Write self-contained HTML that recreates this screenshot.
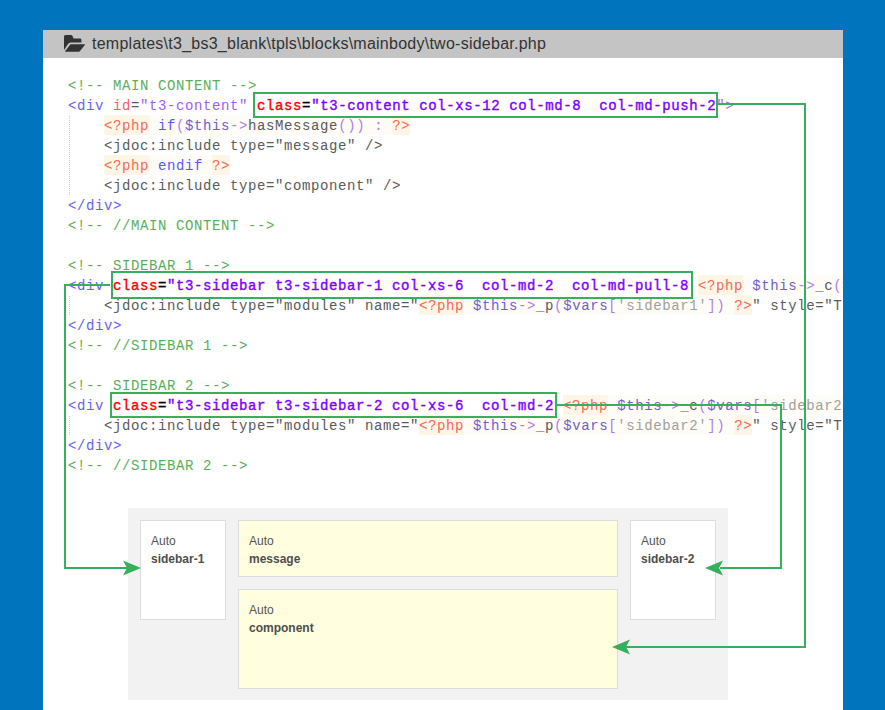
<!DOCTYPE html>
<html><head><meta charset="utf-8">
<style>
html,body{margin:0;padding:0;}
body{width:885px;height:710px;background:#0075bd;position:relative;overflow:hidden;}
#panel{position:absolute;left:43px;top:30px;width:800px;height:680px;background:#fff;overflow:hidden;}
#hdr{position:absolute;left:0;top:0;width:800px;height:28px;background:#c4c4c4;}
#hdr .t{position:absolute;left:49px;top:4px;font-family:"Liberation Sans",sans-serif;font-size:16px;letter-spacing:0.25px;line-height:20px;color:#333;white-space:nowrap;}
#fold{position:absolute;left:17px;top:2px;}
#code{position:absolute;left:25px;top:45.0px;font-family:"Liberation Mono",monospace;font-size:14.0px;letter-spacing:0.599px;line-height:20px;color:#5a5a5a;}
.ln{height:20px;line-height:22px;white-space:pre;}
.c{color:#5aae5a}
.t{color:#6464f2}
.t2{color:#a070f0}
.a{color:#ff5a6a}
.v{color:#a25cf5}
.g{color:#5a5a5a}
.pb{background:#fefcf6;display:inline-block;height:20px;vertical-align:top}
.pd{color:#f4685a;background:#fdf6e7;display:inline-block;height:20px;vertical-align:top}
.pk{color:#5858f0}
.po{color:#b27cf2}
.pv{color:#6f60c8}
.ps{color:#a0a0a0}
.ba{color:#ff0000;-webkit-text-stroke:0.4px #ff0000}
.bq{color:#000;-webkit-text-stroke:0.4px #000}
.bv{color:#8000ff;-webkit-text-stroke:0.4px #8000ff}
.guide{position:absolute;width:0;border-left:1px dotted #c8c8c8;}
.box{position:absolute;border:2px solid #36b05c;box-sizing:border-box;}
#lines{position:absolute;left:0;top:0;}
#diag{position:absolute;left:128px;top:508px;width:600px;height:192px;background:#f2f2f2;}
.mb{position:absolute;box-sizing:border-box;border:1px solid #dcdcdc;background:#fff;font-family:"Liberation Sans",sans-serif;color:#555;}
.mb.y{background:#ffffdf;}
.mb .l1{position:absolute;left:10px;top:13px;font-size:12px;line-height:14px;}
.mb .l2{position:absolute;left:10px;top:31px;font-size:12px;line-height:14px;font-weight:bold;color:#4e4e4e;}
</style></head><body>
<div id="panel">
  <div id="hdr">
    <svg id="fold" width="30" height="24" viewBox="0 0 30 24"><path d="M4 4.5 Q4 3 5.5 3 H11 Q12 3 12.5 4 L13.5 6.4 H20 Q21.4 6.4 21.4 7.8 V10.5 H10.5 Q9 10.5 8 12 L4 18 Z" fill="#333"/><path d="M10.5 12.2 H24.5 Q25.3 12.2 24.8 12.9 L19.8 19.3 Q19.5 19.7 19 19.7 H5.5 Q4.7 19.7 5.2 19 Z" fill="#333"/></svg>
    <div class="t">templates\t3_bs3_blank\tpls\blocks\mainbody\two-sidebar.php</div>
  </div>
  <div id="code"><div class="ln"><span class="c">&lt;!-- MAIN CONTENT --&gt;</span></div><div class="ln"><span class="t">&lt;div</span> <span class="a">id</span><span class="g">=</span><span class="v">"t3-content"</span> <span class="ba">class</span><span class="bq">=</span><span class="bv">"t3-content col-xs-12 col-md-8  col-md-push-2</span><span class="t2">"&gt;</span></div><div class="ln">    <span class="pb"><span class="pd">&lt;?php</span> <span class="pk">if</span><span class="po">(</span><span class="pv">$this</span><span class="po">-&gt;</span><span class="g">hasMessage</span><span class="po">())</span> <span class="po">:</span> <span class="pd">?&gt;</span></span></div><div class="ln">    <span class="g">&lt;jdoc:include type="message" /&gt;</span></div><div class="ln">    <span class="pb"><span class="pd">&lt;?php</span> <span class="pk">endif</span> <span class="pd">?&gt;</span></span></div><div class="ln">    <span class="g">&lt;jdoc:include type="component" /&gt;</span></div><div class="ln"><span class="t">&lt;/div&gt;</span></div><div class="ln"><span class="c">&lt;!-- //MAIN CONTENT --&gt;</span></div><div class="ln">&nbsp;</div><div class="ln"><span class="c">&lt;!-- SIDEBAR 1 --&gt;</span></div><div class="ln"><span class="t">&lt;div</span> <span class="ba">class</span><span class="bq">=</span><span class="bv">"t3-sidebar t3-sidebar-1 col-xs-6  col-md-2  col-md-pull-8</span> <span class="pb"><span class="pd">&lt;?php</span> <span class="pv">$this</span><span class="po">-&gt;</span><span class="g">_c</span><span class="po">(</span><span class="pv">$vars</span><span class="po">[</span><span class="ps">'sidebar1'</span><span class="po">])</span> <span class="pd">?&gt;</span></span><span class="v">"&gt;</span></div><div class="ln">    <span class="g">&lt;jdoc:include type="modules" name="</span><span class="pb"><span class="pd">&lt;?php</span> <span class="pv">$this</span><span class="po">-&gt;</span><span class="g">_p</span><span class="po">(</span><span class="pv">$vars</span><span class="po">[</span><span class="ps">'sidebar1'</span><span class="po">])</span> <span class="pd">?&gt;</span></span><span class="g">" style="T3Xhtml" /&gt;</span></div><div class="ln"><span class="t">&lt;/div&gt;</span></div><div class="ln"><span class="c">&lt;!-- //SIDEBAR 1 --&gt;</span></div><div class="ln">&nbsp;</div><div class="ln"><span class="c">&lt;!-- SIDEBAR 2 --&gt;</span></div><div class="ln"><span class="t">&lt;div</span> <span class="ba">class</span><span class="bq">=</span><span class="bv">"t3-sidebar t3-sidebar-2 col-xs-6  col-md-2</span> <span class="pb"><span class="pd">&lt;?php</span> <span class="pv">$this</span><span class="po">-&gt;</span><span class="g">_c</span><span class="po">(</span><span class="pv">$vars</span><span class="po">[</span><span class="ps">'sidebar2'</span><span class="po">])</span> <span class="pd">?&gt;</span></span><span class="v">"&gt;</span></div><div class="ln">    <span class="g">&lt;jdoc:include type="modules" name="</span><span class="pb"><span class="pd">&lt;?php</span> <span class="pv">$this</span><span class="po">-&gt;</span><span class="g">_p</span><span class="po">(</span><span class="pv">$vars</span><span class="po">[</span><span class="ps">'sidebar2'</span><span class="po">])</span> <span class="pd">?&gt;</span></span><span class="g">" style="T3Xhtml" /&gt;</span></div><div class="ln"><span class="t">&lt;/div&gt;</span></div><div class="ln"><span class="c">&lt;!-- //SIDEBAR 2 --&gt;</span></div></div>
</div>
<div class="guide" style="left:69px;top:116px;height:79px"></div>
<div class="guide" style="left:69px;top:296px;height:19px"></div>
<div class="guide" style="left:69px;top:416px;height:19px"></div>
<div class="box" style="left:253px;top:92px;width:465px;height:26px"></div>
<div class="box" style="left:111px;top:271px;width:582px;height:28px"></div>
<div class="box" style="left:110px;top:392px;width:447px;height:26px"></div>
<div id="diag">
  <div class="mb" style="left:12px;top:12px;width:86px;height:100px"><div class="l1">Auto</div><div class="l2">sidebar-1</div></div>
  <div class="mb y" style="left:110px;top:12px;width:380px;height:57px"><div class="l1">Auto</div><div class="l2">message</div></div>
  <div class="mb y" style="left:110px;top:81px;width:380px;height:100px"><div class="l1">Auto</div><div class="l2">component</div></div>
  <div class="mb" style="left:502px;top:12px;width:86px;height:100px"><div class="l1">Auto</div><div class="l2">sidebar-2</div></div>
</div>
<svg id="lines" width="885" height="710" viewBox="0 0 885 710">
  <g fill="none" stroke="#36b05c" stroke-width="2">
    <path d="M718 104 H805 V647 H626"/>
    <path d="M110 285 H65 V568 H127"/>
    <path d="M557 405 H781 V568 H720"/>
  </g>
  <g fill="#36b05c">
    <path d="M141 568 L123 560.5 L127 568 L123 575.5 Z"/>
    <path d="M705 568 L723 560.5 L719 568 L723 575.5 Z"/>
    <path d="M612 647 L630 639.5 L626 647 L630 654.5 Z"/>
  </g>
</svg>
</body></html>
